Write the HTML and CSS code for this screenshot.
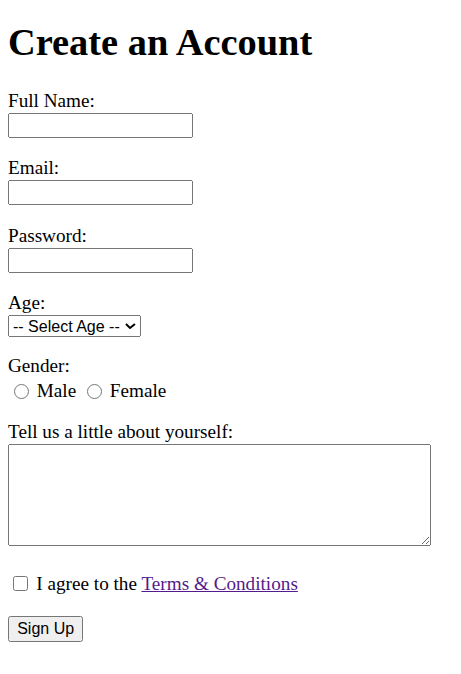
FILE: index.html
```html
<!DOCTYPE html>
<html>
<head>
<meta charset="utf-8">
<title>Create an Account</title>
<link rel="stylesheet" href="styles.css">
</head>
<body>
<h1 class="title">Create an Account</h1>
<form class="form">
  <div class="group">
    <label class="label" for="name">Full Name:</label>
    <input type="text" id="name" class="ctl text">
  </div>

  <div class="group">
    <label class="label" for="email">Email:</label>
    <input type="email" id="email" class="ctl text">
  </div>

  <div class="group">
    <label class="label" for="pw">Password:</label>
    <input type="password" id="pw" class="ctl text">
  </div>

  <div class="group group-select">
    <label class="label" for="age">Age:</label>
    <select id="age" class="ctl sel">
      <option>-- Select Age --</option>
    </select>
  </div>

  <div class="group group-radio">
    <span class="label">Gender:</span>
    <div class="choice-row">
      <input type="radio" name="g" id="m" class="radio"> <label for="m">Male</label>
      <input type="radio" name="g" id="f" class="radio"> <label for="f">Female</label>
    </div>
  </div>

  <div class="group group-area">
    <label class="label" for="bio">Tell us a little about yourself:</label>
    <textarea id="bio" class="area"></textarea>
  </div>

  <div class="group group-check">
    <div class="choice-row check-row">
      <input type="checkbox" id="t" class="check"> <label for="t">I agree to the <a href="#" class="link">Terms &amp; Conditions</a></label>
    </div>
  </div>

  <div class="actions">
    <button type="submit" class="ctl btn">Sign Up</button>
  </div>
</form>
</body>
</html>
```

FILE: styles.css
```css
body {
  margin: 8px;
  font-family: "Liberation Serif", "Times New Roman", serif;
  font-size: 19.2px;
  line-height: 22px;
  color: #000;
}
.title {
  font-size: 38.4px;
  line-height: 44px;
  margin: 12px 0 26px;
}
.form {
  margin: 0;
}
.group {
  margin-bottom: 19.5px;
}
.label {
  display: block;
}
.ctl {
  zoom: 1.2;
}
.text {
  display: block;
  box-sizing: border-box;
  width: 154.17px;
  height: 20.83px;
  margin: 0.8px 0 0;
}
.group-select {
  margin-bottom: 18px;
}
.sel {
  display: block;
  box-sizing: border-box;
  height: 18px;
  margin: 0.8px 0 0;
}
.group-radio {
  margin-bottom: 19.3px;
}
.choice-row {
  margin-top: 2.7px;
}
.radio {
  width: 15px;
  height: 15px;
  margin: 0 3px 0 6px;
  vertical-align: -2px;
}
.group-area {
  margin-bottom: 27px;
}
.area {
  display: block;
  box-sizing: border-box;
  width: 423px;
  height: 102px;
  margin: 1px 0 0;
}
.group-check {
  margin-bottom: 21px;
}
.check-row {
  margin-top: 0;
}
.check {
  width: 15px;
  height: 15px;
  margin: 0 4px 0 4.5px;
  vertical-align: -1.5px;
}
.btn {
  height: 21.67px;
  margin: 0;
}
.link {
  color: #551a8b;
}
```
